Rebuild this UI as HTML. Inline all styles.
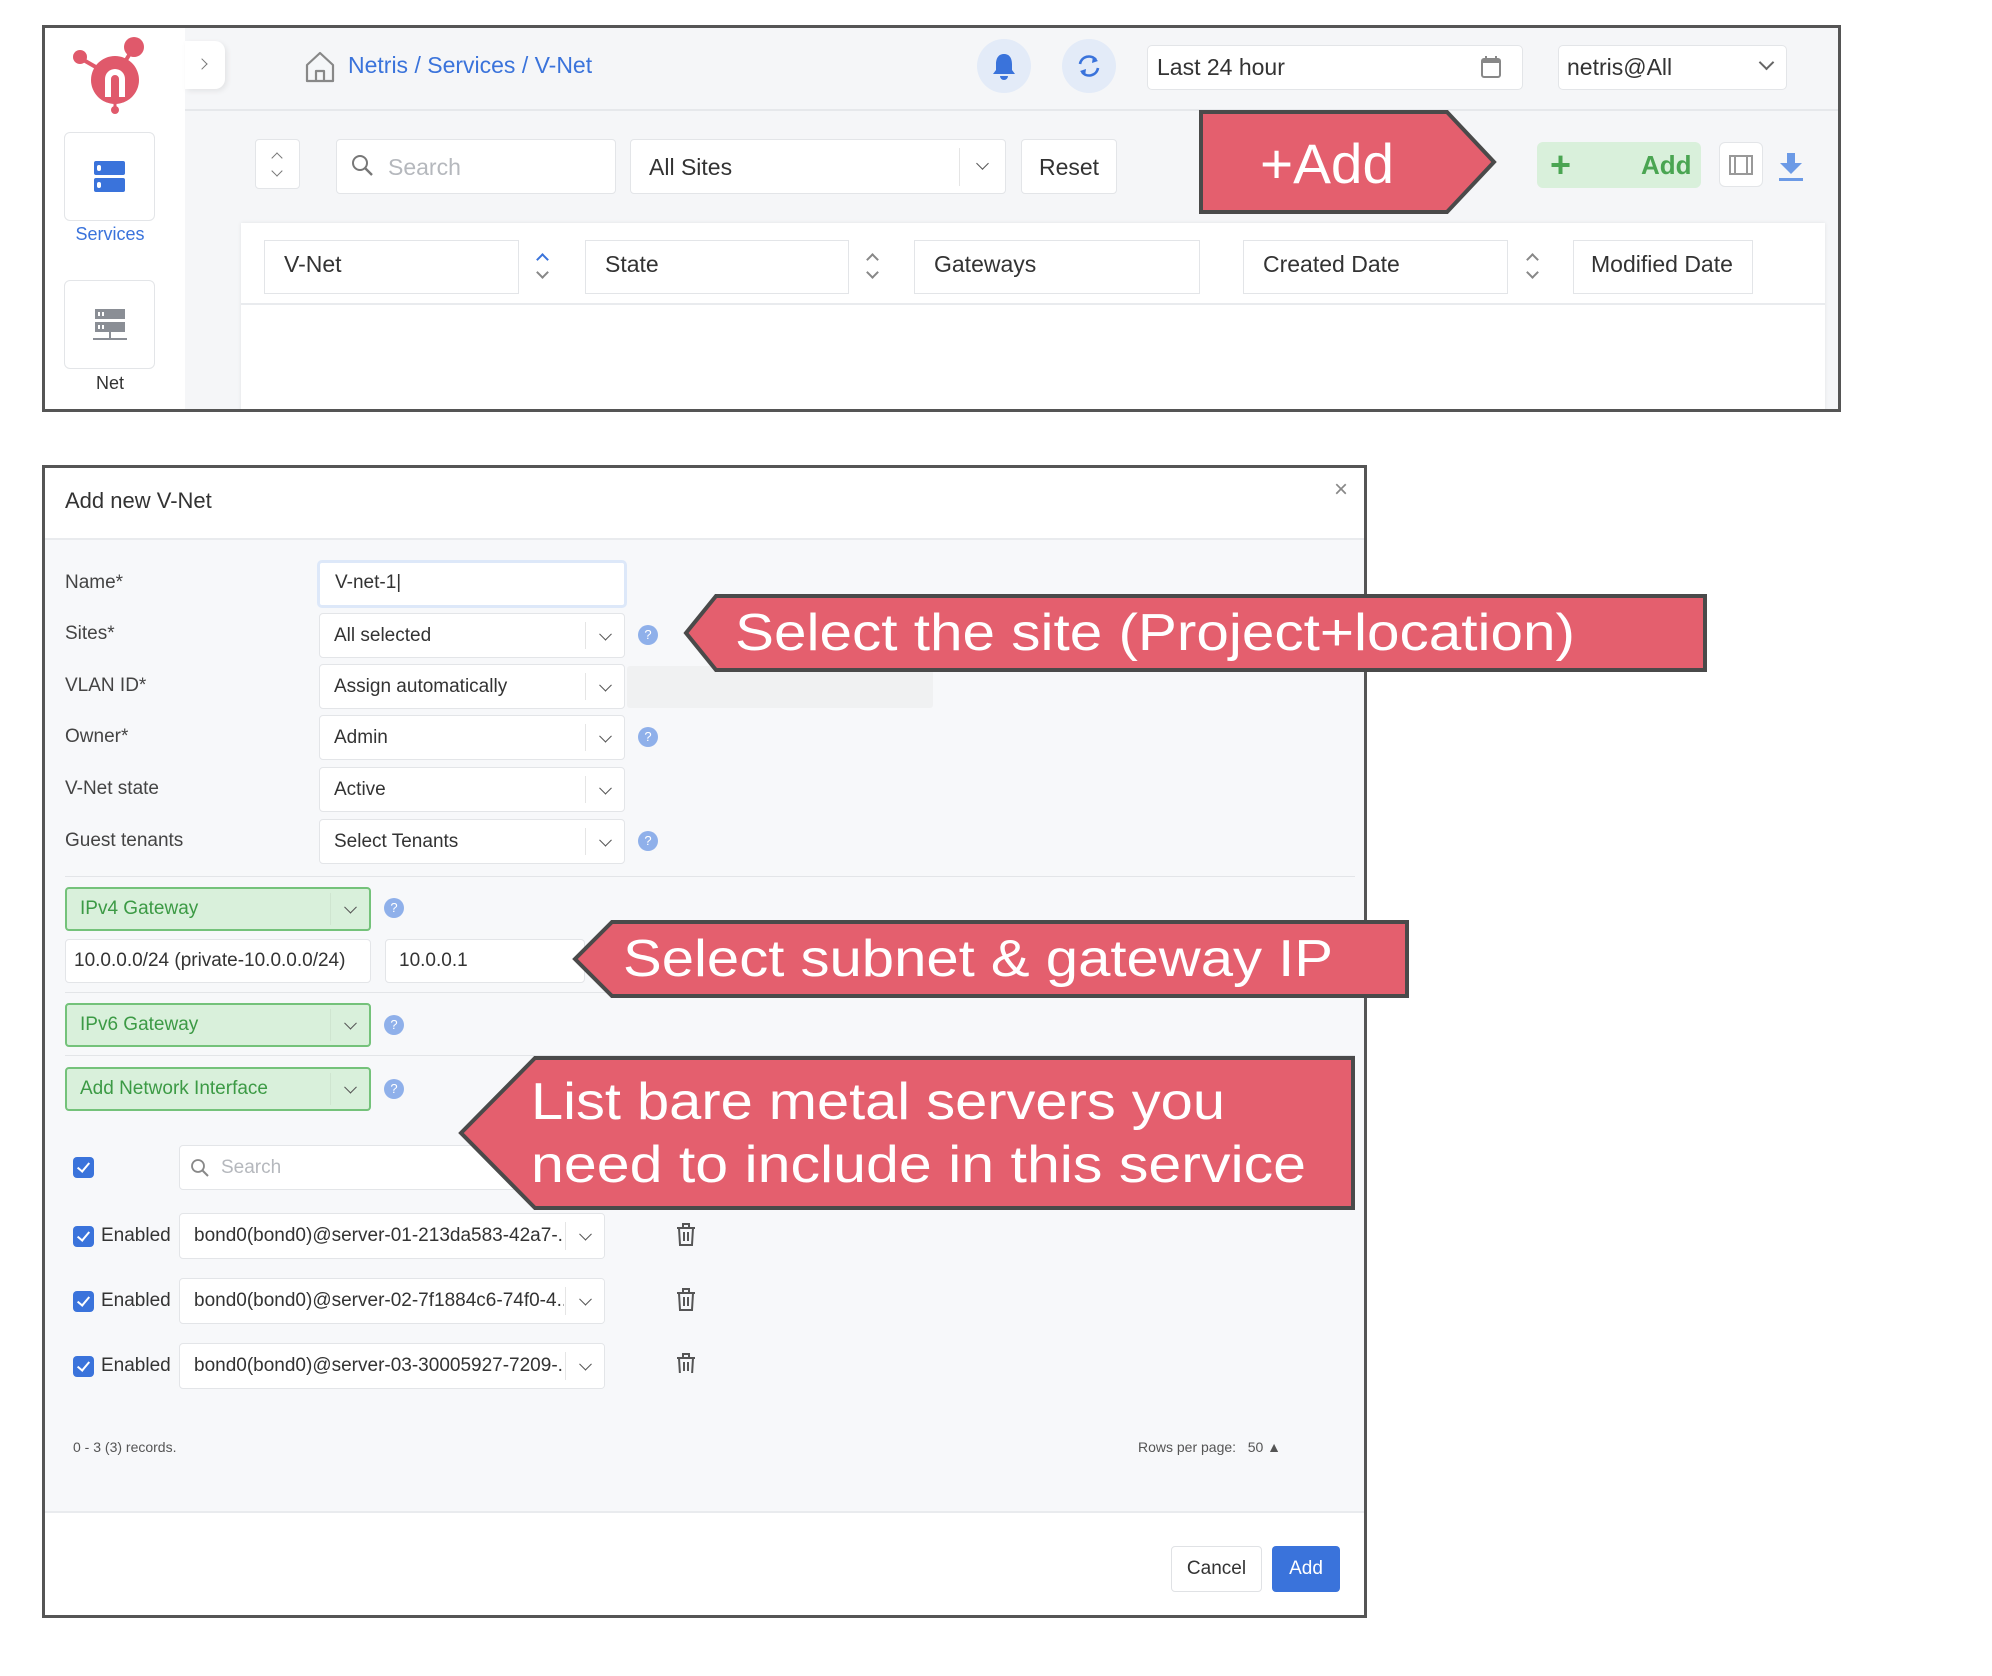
<!DOCTYPE html>
<html><head><meta charset="utf-8">
<style>
*{box-sizing:border-box;margin:0;padding:0}
body{width:1992px;height:1676px;background:#fff;position:relative;overflow:hidden;font-family:"Liberation Sans",sans-serif;color:#333}
.a{position:absolute}
.box{position:absolute;background:#fff;border:1px solid #e3e5e8;border-radius:4px}
.lbl{position:absolute;font-size:19px;color:#444}
.sel{position:absolute;background:#fff;border:1px solid #e3e5e8;border-radius:4px;font-size:19px;color:#333;padding-left:14px;display:flex;align-items:center;white-space:nowrap;overflow:hidden}
.sel .dv{position:absolute;right:38px;top:8px;bottom:8px;border-left:1px solid #e5e5e5}
.chev{position:absolute;right:14px;top:50%;width:9px;height:9px;border-right:1.6px solid #555;border-bottom:1.6px solid #555;transform:translateY(-70%) rotate(45deg)}
.help{position:absolute;width:20px;height:20px;border-radius:50%;background:#8fb0ea;color:#fff;font-size:13px;text-align:center;line-height:20px}
.green{position:absolute;background:#d9f0db;border:2px solid #74c27a;border-radius:4px;color:#3c9a45;font-size:19px;padding-left:13px;display:flex;align-items:center}
.green .dv{position:absolute;right:38px;top:4px;bottom:4px;border-left:1px solid #cfe5d0}
.cb{position:absolute;width:21px;height:21px;border-radius:4px;background:#3a73db}
.cb:after{content:"";position:absolute;left:7px;top:3px;width:5px;height:10px;border-right:2.5px solid #fff;border-bottom:2.5px solid #fff;transform:rotate(40deg)}
.sep{position:absolute;height:1px;background:#e3e5e8}
.su,.sd{position:absolute;width:9px;height:9px;border-color:#888;border-style:solid;border-width:0}
.su{border-left-width:2px;border-top-width:2px;transform:rotate(45deg)}
.sd{border-right-width:2px;border-bottom-width:2px;transform:rotate(45deg)}
</style></head><body>

<!-- TOP FRAME -->
<div class="a" style="left:42px;top:25px;width:1799px;height:387px;border:3px solid #555;background:#f5f6f8;overflow:hidden">
  <div class="a" style="left:0;top:0;width:140px;height:390px;background:#fff"></div>
  <svg class="a" style="left:22px;top:5px" width="100" height="85" viewBox="0 0 100 85">
    <g fill="#e0596b">
      <line x1="48" y1="45" x2="13" y2="25" stroke="#e0596b" stroke-width="4"/>
      <line x1="48" y1="45" x2="67" y2="14" stroke="#e0596b" stroke-width="4"/>
      <circle cx="48" cy="47" r="24"/>
      <circle cx="13" cy="24" r="7"/>
      <circle cx="67" cy="14" r="10"/>
      <circle cx="48" cy="77" r="4"/>
      <line x1="48" y1="70" x2="48" y2="77" stroke="#e0596b" stroke-width="3"/>
    </g>
    <path d="M38 64 V46 a10 10 0 0 1 20 0 V64 h-6 V46 a4 4 0 0 0 -8 0 V64 z" fill="#fff"/>
  </svg>
  <div class="a" style="left:140px;top:13px;width:40px;height:48px;background:#fff;border-radius:0 10px 10px 0;box-shadow:2px 2px 6px rgba(0,0,0,.08)"></div>
  <div class="a" style="left:153px;top:32px;width:8px;height:8px;border-right:1.5px solid #777;border-top:1.5px solid #777;transform:rotate(45deg)"></div>
  <div class="box" style="left:19px;top:104px;width:91px;height:89px;border-radius:6px"></div>
  <div class="a" style="left:49px;top:133px;width:31px;height:14px;background:#3a73db;border-radius:2px"></div>
  <div class="a" style="left:49px;top:150px;width:31px;height:14px;background:#3a73db;border-radius:2px"></div>
  <div class="a" style="left:52px;top:137px;width:4px;height:6px;background:#fff;border-radius:2px"></div>
  <div class="a" style="left:52px;top:154px;width:4px;height:6px;background:#fff;border-radius:2px"></div>
  <div class="a" style="left:0;top:196px;width:130px;text-align:center;font-size:18px;color:#3a73db">Services</div>
  <div class="box" style="left:19px;top:252px;width:91px;height:89px;border-radius:6px"></div>
  <div class="a" style="left:50px;top:281px;width:30px;height:10px;background:#8a8e95"></div>
  <div class="a" style="left:50px;top:294px;width:30px;height:10px;background:#8a8e95"></div>
  <div class="a" style="left:53px;top:284px;width:2px;height:4px;background:#fff"></div>
  <div class="a" style="left:57px;top:284px;width:2px;height:4px;background:#fff"></div>
  <div class="a" style="left:53px;top:297px;width:2px;height:4px;background:#fff"></div>
  <div class="a" style="left:57px;top:297px;width:2px;height:4px;background:#fff"></div>
  <div class="a" style="left:64px;top:304px;width:2px;height:8px;background:#8a8e95"></div>
  <div class="a" style="left:48px;top:310px;width:34px;height:2px;background:#8a8e95"></div>
  <div class="a" style="left:0;top:345px;width:130px;text-align:center;font-size:18px;color:#333">Net</div>
  <div class="a" style="left:140px;top:81px;width:1670px;height:2px;background:#e6e8eb"></div>
  <svg class="a" style="left:258px;top:22px" width="34" height="34" viewBox="0 0 34 34"><path d="M4 15 L17 3 L30 15 V31 H4 Z M13 31 V21 H21 V31" fill="none" stroke="#888" stroke-width="2.2" stroke-linejoin="round"/></svg>
  <div class="a" style="left:303px;top:24px;font-size:23px;color:#3a73db">Netris / Services / V-Net</div>
  <div class="a" style="left:932px;top:11px;width:54px;height:54px;border-radius:50%;background:#e3ebf8"></div>
  <svg class="a" style="left:947px;top:24px" width="24" height="28" viewBox="0 0 24 28"><path d="M12 2 C6 2 4 7 4 12 V18 L1 22 H23 L20 18 V12 C20 7 18 2 12 2Z M8 24 a4 4 0 0 0 8 0Z" fill="#3a73db"/></svg>
  <div class="a" style="left:1017px;top:11px;width:54px;height:54px;border-radius:50%;background:#e3ebf8"></div>
  <svg class="a" style="left:1029px;top:23px" width="30" height="30" viewBox="0 0 30 30"><path d="M6 13 A9 9 0 0 1 22 9 M24 17 A9 9 0 0 1 8 21" fill="none" stroke="#3a73db" stroke-width="2.6"/><path d="M19 5 L24 10 L18 12Z M11 25 L6 20 L12 18Z" fill="#3a73db"/></svg>
  <div class="box" style="left:1102px;top:17px;width:376px;height:45px;border-radius:5px"></div>
  <div class="a" style="left:1112px;top:26px;font-size:23px;color:#333">Last 24 hour</div>
  <svg class="a" style="left:1435px;top:27px" width="22" height="24" viewBox="0 0 22 24"><rect x="2" y="4" width="18" height="18" rx="2" fill="none" stroke="#888" stroke-width="2"/><rect x="2" y="4" width="18" height="4" fill="#888"/><path d="M6 1 V6 M16 1 V6" stroke="#888" stroke-width="2"/></svg>
  <div class="box" style="left:1513px;top:17px;width:229px;height:45px;border-radius:5px"></div>
  <div class="a" style="left:1522px;top:26px;font-size:23px;color:#333">netris@All</div>
  <div class="a" style="left:1716px;top:29px;width:11px;height:11px;border-right:2px solid #666;border-bottom:2px solid #666;transform:rotate(45deg)"></div>
  <div class="box" style="left:210px;top:111px;width:45px;height:50px"></div>
  <div class="a" style="left:228px;top:126px;width:8px;height:8px;border-left:1.5px solid #777;border-top:1.5px solid #777;transform:rotate(45deg)"></div>
  <div class="a" style="left:228px;top:139px;width:8px;height:8px;border-right:1.5px solid #777;border-bottom:1.5px solid #777;transform:rotate(45deg)"></div>
  <div class="box" style="left:291px;top:111px;width:280px;height:55px"></div>
  <svg class="a" style="left:305px;top:125px" width="26" height="26" viewBox="0 0 26 26"><circle cx="10" cy="10" r="7" fill="none" stroke="#777" stroke-width="2"/><path d="M15 15 L22 22" stroke="#777" stroke-width="2.4"/></svg>
  <div class="a" style="left:343px;top:126px;font-size:23px;color:#b5b8bd">Search</div>
  <div class="box" style="left:585px;top:111px;width:376px;height:55px"></div>
  <div class="a" style="left:604px;top:126px;font-size:23px;color:#333">All Sites</div>
  <div class="a" style="left:914px;top:120px;width:1px;height:38px;background:#e5e5e5"></div>
  <div class="a" style="left:933px;top:131px;width:9px;height:9px;border-right:1.6px solid #555;border-bottom:1.6px solid #555;transform:rotate(45deg)"></div>
  <div class="box" style="left:976px;top:111px;width:96px;height:55px"></div>
  <div class="a" style="left:976px;top:126px;width:96px;text-align:center;font-size:23px;color:#333">Reset</div>
  <div class="a" style="left:1492px;top:114px;width:164px;height:46px;background:#d9f0db;border-radius:6px"></div>
  <div class="a" style="left:1505px;top:114px;font-size:36px;font-weight:bold;color:#4aa552;line-height:46px">+</div>
  <div class="a" style="left:1596px;top:122px;font-size:26px;font-weight:bold;color:#4aa552">Add</div>
  <div class="box" style="left:1674px;top:114px;width:44px;height:45px;border-radius:6px"></div>
  <div class="a" style="left:1684px;top:127px;width:24px;height:20px;border:2px solid #999"></div>
  <div class="a" style="left:1689px;top:127px;width:14px;height:20px;border-left:2px solid #999;border-right:2px solid #999"></div>
  <svg class="a" style="left:1733px;top:124px" width="26" height="30" viewBox="0 0 26 30"><path d="M9 1 H17 V11 H24 L13 22 L2 11 H9 Z" fill="#6c9ae6"/><rect x="1" y="26" width="24" height="3" fill="#6c9ae6"/></svg>
  <div class="a" style="left:196px;top:195px;width:1584px;height:200px;background:#fff;box-shadow:0 0 4px rgba(0,0,0,.08)"></div>
  <div class="a" style="left:196px;top:275px;width:1584px;height:2px;background:#e9ebee"></div>
  <div class="box" style="left:219px;top:212px;width:255px;height:54px;border-radius:0"></div>
  <div class="a" style="left:239px;top:223px;font-size:23px;color:#333">V-Net</div>
  <div class="su" style="left:493px;top:227px;border-color:#3a73db"></div><div class="sd" style="left:493px;top:240px"></div>
  <div class="box" style="left:540px;top:212px;width:264px;height:54px;border-radius:0"></div>
  <div class="a" style="left:560px;top:223px;font-size:23px;color:#333">State</div>
  <div class="su" style="left:823px;top:227px"></div><div class="sd" style="left:823px;top:240px"></div>
  <div class="box" style="left:869px;top:212px;width:286px;height:54px;border-radius:0"></div>
  <div class="a" style="left:889px;top:223px;font-size:23px;color:#333">Gateways</div>
  <div class="box" style="left:1198px;top:212px;width:265px;height:54px;border-radius:0"></div>
  <div class="a" style="left:1218px;top:223px;font-size:23px;color:#333">Created Date</div>
  <div class="su" style="left:1483px;top:227px"></div><div class="sd" style="left:1483px;top:240px"></div>
  <div class="box" style="left:1528px;top:212px;width:180px;height:54px;border-radius:0"></div>
  <div class="a" style="left:1546px;top:223px;font-size:23px;color:#333">Modified Date</div>
</div>

<!-- MODAL FRAME -->
<div class="a" style="left:42px;top:465px;width:1325px;height:1153px;border:3px solid #555;background:#fff;overflow:hidden">
  <div class="a" style="left:20px;top:20px;font-size:22px;color:#333">Add new V-Net</div>
  <div class="a" style="left:1289px;top:8px;font-size:24px;color:#888">&times;</div>
  <div class="a" style="left:0;top:70px;width:1325px;height:975px;background:#f7f8fa;border-top:2px solid #e9ebee;border-bottom:2px solid #e9ebee"></div>

  <div class="lbl" style="left:20px;top:104px">Name*</div>
  <div class="a" style="left:272px;top:92px;width:310px;height:48px;background:#fff;border:3px solid #dde8f9;border-radius:5px"></div>
  <div class="a" style="left:290px;top:104px;font-size:19px;color:#333">V-net-1|</div>

  <div class="lbl" style="left:20px;top:155px">Sites*</div>
  <div class="sel" style="left:274px;top:145px;width:306px;height:45px">All selected<div class="dv"></div><div class="chev"></div></div>
  <div class="help" style="left:593px;top:157px">?</div>

  <div class="lbl" style="left:20px;top:207px">VLAN ID*</div>
  <div class="sel" style="left:274px;top:196px;width:306px;height:45px">Assign automatically<div class="dv"></div><div class="chev"></div></div>
  <div class="a" style="left:582px;top:198px;width:306px;height:42px;background:#f0f1f2;border-radius:3px"></div>

  <div class="lbl" style="left:20px;top:258px">Owner*</div>
  <div class="sel" style="left:274px;top:247px;width:306px;height:45px">Admin<div class="dv"></div><div class="chev"></div></div>
  <div class="help" style="left:593px;top:259px">?</div>

  <div class="lbl" style="left:20px;top:310px">V-Net state</div>
  <div class="sel" style="left:274px;top:299px;width:306px;height:45px">Active<div class="dv"></div><div class="chev"></div></div>

  <div class="lbl" style="left:20px;top:362px">Guest tenants</div>
  <div class="sel" style="left:274px;top:351px;width:306px;height:45px">Select Tenants<div class="dv"></div><div class="chev"></div></div>
  <div class="help" style="left:593px;top:363px">?</div>

  <div class="sep" style="left:20px;top:408px;width:1290px"></div>

  <div class="green" style="left:20px;top:419px;width:306px;height:44px">IPv4 Gateway<div class="dv"></div><div class="chev"></div></div>
  <div class="help" style="left:339px;top:430px">?</div>
  <div class="sel" style="left:20px;top:471px;width:306px;height:44px;padding-left:8px">10.0.0.0/24 (private-10.0.0.0/24)</div>
  <div class="sel" style="left:340px;top:471px;width:200px;height:44px;padding-left:13px">10.0.0.1</div>
  <div class="sep" style="left:20px;top:524px;width:1290px"></div>

  <div class="green" style="left:20px;top:535px;width:306px;height:44px">IPv6 Gateway<div class="dv"></div><div class="chev"></div></div>
  <div class="help" style="left:339px;top:547px">?</div>
  <div class="sep" style="left:20px;top:587px;width:1290px"></div>

  <div class="green" style="left:20px;top:599px;width:306px;height:44px">Add Network Interface<div class="dv"></div><div class="chev"></div></div>
  <div class="help" style="left:339px;top:611px">?</div>

  <div class="cb" style="left:28px;top:689px"></div>
  <div class="box" style="left:134px;top:677px;width:400px;height:45px"></div>
  <svg class="a" style="left:144px;top:689px" width="22" height="22" viewBox="0 0 22 22"><circle cx="9" cy="9" r="6" fill="none" stroke="#888" stroke-width="1.8"/><path d="M13 13 L19 19" stroke="#888" stroke-width="2"/></svg>
  <div class="a" style="left:176px;top:689px;font-size:19px;color:#b5b8bd">Search</div>

  <div class="cb" style="left:28px;top:758px"></div>
  <div class="lbl" style="left:56px;top:757px;color:#333">Enabled</div>
  <div class="sel" style="left:134px;top:745px;width:426px;height:46px">bond0(bond0)@server-01-213da583-42a7-...<div class="a" style="right:0;top:0;bottom:0;width:40px;background:#fff"></div><div class="dv"></div><div class="chev"></div></div>
  <div class="cb" style="left:28px;top:823px"></div>
  <div class="lbl" style="left:56px;top:822px;color:#333">Enabled</div>
  <div class="sel" style="left:134px;top:810px;width:426px;height:46px">bond0(bond0)@server-02-7f1884c6-74f0-4...<div class="a" style="right:0;top:0;bottom:0;width:40px;background:#fff"></div><div class="dv"></div><div class="chev"></div></div>
  <div class="cb" style="left:28px;top:888px"></div>
  <div class="lbl" style="left:56px;top:887px;color:#333">Enabled</div>
  <div class="sel" style="left:134px;top:875px;width:426px;height:46px">bond0(bond0)@server-03-30005927-7209-...<div class="a" style="right:0;top:0;bottom:0;width:40px;background:#fff"></div><div class="dv"></div><div class="chev"></div></div>
  <svg class="a" style="left:630px;top:755px" width="22" height="150" viewBox="0 0 22 150">
    <g fill="none" stroke="#555" stroke-width="2">
      <path d="M2 5 H20 M8 5 V1 H14 V5 M4 5 L5 22 H17 L18 5 M9 9 V18 M13 9 V18"/>
      <path transform="translate(0,65)" d="M2 5 H20 M8 5 V1 H14 V5 M4 5 L5 22 H17 L18 5 M9 9 V18 M13 9 V18"/>
      <path transform="translate(0,130)" d="M2 5 H20 M8 5 V1 H14 V5 M4 5 L5 22 H17 L18 5 M9 9 V18 M13 9 V18"/>
    </g>
  </svg>

  <div class="a" style="left:28px;top:971px;font-size:14px;color:#555">0 - 3 (3) records.</div>
  <div class="a" style="left:1093px;top:971px;font-size:14px;color:#555">Rows per page: &nbsp;&nbsp;50 &#9650;</div>

  <div class="a" style="left:1126px;top:1078px;width:91px;height:46px;background:#fff;border:1px solid #e0e2e5;border-radius:4px;text-align:center;line-height:44px;font-size:19px;color:#333">Cancel</div>
  <div class="a" style="left:1227px;top:1078px;width:68px;height:46px;background:#3a73db;border-radius:4px;text-align:center;line-height:46px;font-size:19px;color:#fff">Add</div>
</div>

<!-- CALLOUTS -->
<svg class="a" style="left:0;top:0" width="1992" height="1676" viewBox="0 0 1992 1676">
  <g fill="#e45f6e" stroke="#4a4a4a" stroke-width="4" stroke-linejoin="miter">
    <path d="M1201 112 H1447 L1494 162 L1447 212 H1201 Z"/>
    <path d="M716 596 H1705 V670 H716 L686 633 Z"/>
    <path d="M612 922 H1407 V996 H612 L575 959 Z"/>
    <path d="M535 1058 H1353 V1208 H535 L461 1133 Z"/>
  </g>
  <g fill="#fff" font-family="Liberation Sans, sans-serif">
    <text x="1260" y="183" font-size="56" textLength="134" lengthAdjust="spacingAndGlyphs">+Add</text>
    <text x="735" y="650" font-size="52" textLength="840" lengthAdjust="spacingAndGlyphs">Select the site (Project+location)</text>
    <text x="623" y="976" font-size="52" textLength="710" lengthAdjust="spacingAndGlyphs">Select subnet &amp; gateway IP</text>
    <text x="531" y="1119" font-size="52" textLength="694" lengthAdjust="spacingAndGlyphs">List bare metal servers you</text>
    <text x="531" y="1182" font-size="52" textLength="775" lengthAdjust="spacingAndGlyphs">need to include in this service</text>
  </g>
</svg>
</body></html>
